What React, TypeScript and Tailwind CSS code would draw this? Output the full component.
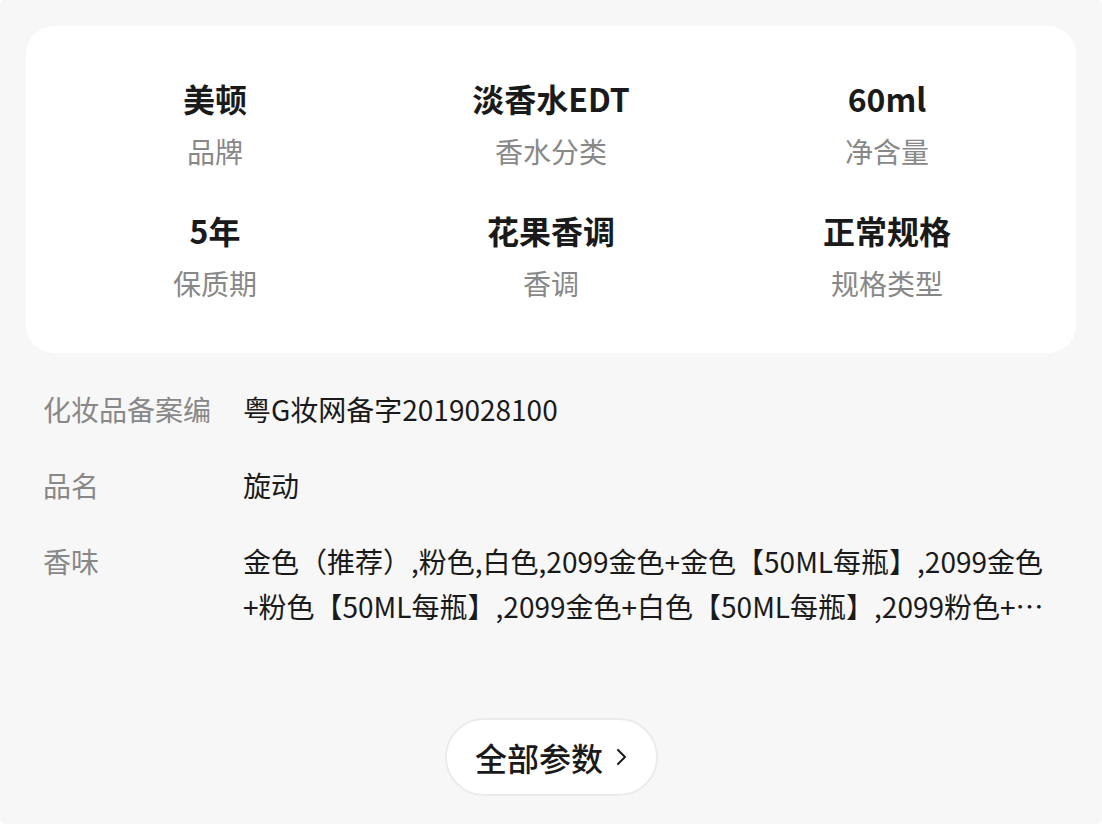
import React from 'react';

const specs = [
    { value: '美顿', label: '品牌' },
    { value: '淡香水EDT', label: '香水分类' },
    { value: '60ml', label: '净含量' },
    { value: '5年', label: '保质期' },
    { value: '花果香调', label: '香调' },
    { value: '正常规格', label: '规格类型' },
];

const params = [
    { label: '化妆品备案编', value: '粤G妆网备字2019028100' },
    { label: '品名', value: '旋动' },
    {
        label: '香味',
        value:
            '金色（推荐）,粉色,白色,2099金色+金色【50ML每瓶】,2099金色+粉色【50ML每瓶】,2099金色+白色【50ML每瓶】,2099粉色+金色【50ML每瓶】,2099粉色+粉色【50ML每瓶】,2099粉色+白色【50ML每瓶】',
    },
];

const ChevronRight = () => (
    <svg width="12" height="18" viewBox="0 0 12 18" fill="none" className="text-[#1a1a1a]">
        <path d="M3 2l7 7-7 7" stroke="currentColor" strokeWidth="2" strokeLinecap="round" strokeLinejoin="round" />
    </svg>
);

export default function App() {
    return (
        <div className="bg-white min-h-[824px]" style={{ fontFamily: '"Noto Sans CJK SC", "Noto Sans", sans-serif' }}>
            <div className="h-[824px] bg-[#f7f7f7] rounded-[5px] px-[26px] pt-[26px] flex flex-col">
                {/* 상단 스펙 카드 */}
                <div className="bg-white rounded-[28px] px-[21px] pt-[50px] pb-[50px] grid grid-cols-3 gap-y-[37px]">
                    {specs.map((s) => (
                        <div key={s.label} className="flex flex-col items-center">
                            <div className="h-[44px] leading-[44px] text-[32px] font-bold text-[#1a1a1a]">{s.value}</div>
                            <div className="mt-[11px] h-[40px] leading-[40px] text-[28px] text-[#888888]">{s.label}</div>
                        </div>
                    ))}
                </div>

                {/* 파라미터 목록 */}
                <div className="mt-[34px] flex flex-col gap-[31px] pl-[17px] pr-[16px]">
                    {params.map((p) => (
                        <div key={p.label} className="flex text-[28px] leading-[45px]">
                            <div className="w-[200px] shrink-0 text-[#888888] whitespace-nowrap">{p.label}</div>
                            <div className="flex-1 text-[#1a1a1a] line-clamp-2 break-all">{p.value}</div>
                        </div>
                    ))}
                </div>

                <div className="mt-[89px] flex justify-center">
                    <button className="h-[78px] w-[213px] rounded-full bg-white border-2 border-[#ebebeb] flex items-center justify-center gap-[12px] text-[32px] font-medium text-[#1a1a1a]">
                        <span>全部参数</span>
                        <ChevronRight />
                    </button>
                </div>
            </div>
        </div>
    );
}
